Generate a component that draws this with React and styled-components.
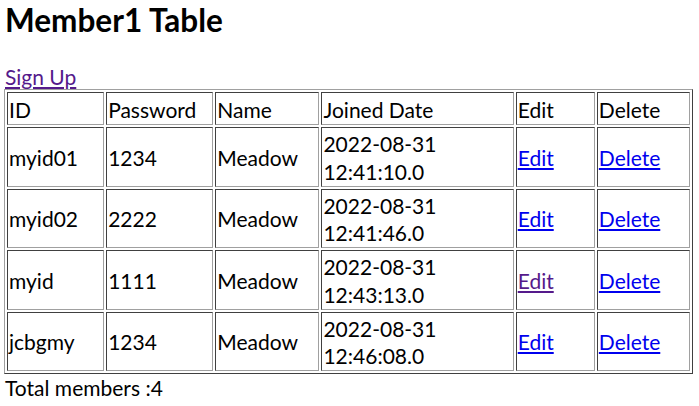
import React from 'react';
import styled, { createGlobalStyle } from 'styled-components';

const GlobalStyle = createGlobalStyle`
  body {
    margin: 0 6px 0 4px;
    font-family: Lato, "Noto Sans", "Noto Sans CJK KR", sans-serif;
    font-size: 21px;
    color: #000;
    background: #fff;
  }
`;

const Title = styled.h1`
  margin: 0 0 24px 1px;
  font-size: 31.5px;
  line-height: 40px;
  font-weight: 700;
`;

const SignUpRow = styled.div`
  line-height: 25px;
  padding-left: 1px;
`;

const Link = styled.a`
  color: ${(p) => (p.$visited ? '#551a8b' : '#0000ee')};
  text-decoration: underline;
  cursor: pointer;
`;

const MemberTable = styled.table`
  width: 100%;
  table-layout: fixed;
  border-collapse: separate;
  border-spacing: 2px;
  border: 1px solid;
  border-color: #a0a0a0 #404040 #404040 #a0a0a0;
`;

const HeadCell = styled.td`
  box-sizing: border-box;
  width: ${(p) => p.$width}px;
  padding: 2px 1px 0;
  line-height: 29px;
  border: 1px solid;
  border-color: #404040 #a0a0a0 #a0a0a0 #404040;
  text-align: left;
  vertical-align: middle;
`;

const Cell = styled.td`
  padding: 2px 1px 0;
  line-height: 27.75px;
  border: 1px solid;
  border-color: #404040 #a0a0a0 #a0a0a0 #404040;
  text-align: left;
  vertical-align: middle;
`;

const Total = styled.div`
  line-height: 28px;
  padding-left: 1px;
`;

const columns = [
  { label: 'ID', width: 97 },
  { label: 'Password', width: 107 },
  { label: 'Name', width: 104 },
  { label: 'Joined Date', width: 192 },
  { label: 'Edit', width: 79 },
  { label: 'Delete', width: 93 },
];

const members = [
  { id: 'myid01', password: '1234', name: 'Meadow', date: '2022-08-31', time: '12:41:10.0' },
  { id: 'myid02', password: '2222', name: 'Meadow', date: '2022-08-31', time: '12:41:46.0' },
  { id: 'myid', password: '1111', name: 'Meadow', date: '2022-08-31', time: '12:43:13.0', editVisited: true },
  { id: 'jcbgmy', password: '1234', name: 'Meadow', date: '2022-08-31', time: '12:46:08.0' },
];

const App = () => {
  return (
    <>
      <GlobalStyle />
      <Title>Member1 Table</Title>
      <SignUpRow>
        <Link $visited>Sign Up</Link>
      </SignUpRow>
      <MemberTable>
        <tbody>
          <tr>
            {columns.map((col) => (
              <HeadCell key={col.label} $width={col.width}>
                {col.label}
              </HeadCell>
            ))}
          </tr>
          {members.map((m) => (
            <tr key={m.id}>
              <Cell>{m.id}</Cell>
              <Cell>{m.password}</Cell>
              <Cell>{m.name}</Cell>
              <Cell>
                {m.date}
                <br />
                {m.time}
              </Cell>
              <Cell>
                <Link $visited={m.editVisited}>Edit</Link>
              </Cell>
              <Cell>
                <Link>Delete</Link>
              </Cell>
            </tr>
          ))}
        </tbody>
      </MemberTable>
      <Total>Total members :{members.length}</Total>
    </>
  );
};

export default App;
